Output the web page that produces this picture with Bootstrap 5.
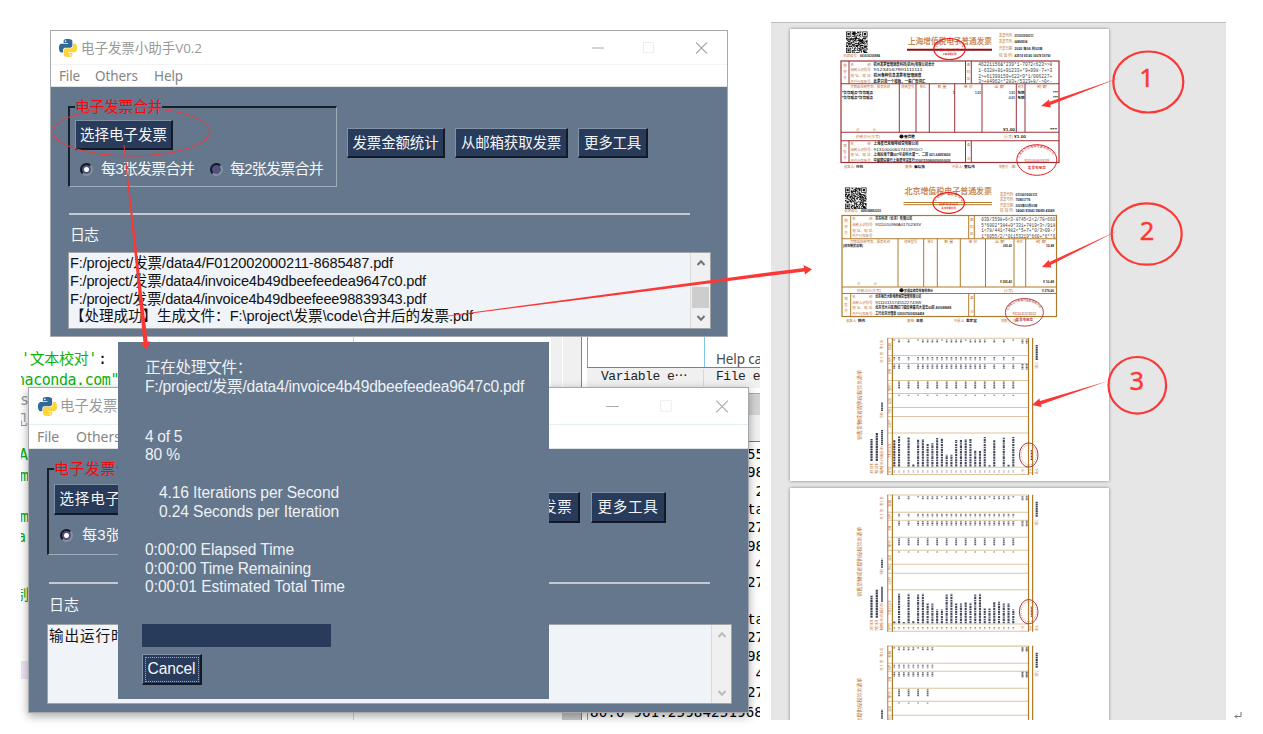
<!DOCTYPE html>
<html lang="zh-CN">
<head>
<meta charset="utf-8">
<meta name="viewport" content="width=device-width, initial-scale=1">
<title>电子发票小助手V0.2</title>
<link href="https://cdn.jsdelivr.net/npm/bootstrap@5.3.0/dist/css/bootstrap.min.css" rel="stylesheet">
<style>
  :root { --slate:#64778d; --navy:#283b5b; --pale:#f0f3f7; --pen:#fb3836; }
  body { font-family:"Liberation Sans","Noto Sans CJK SC",sans-serif; font-size:15px; line-height:18px; color:#000; }
  .desk { width:1263px; height:734px; }
  [data-w] { display:inline-block; white-space:pre; }
  /* program windows, free on the desktop */
  .win { position:absolute; background:var(--slate); border:1px solid #a5a9ae; color:#f4f6f8; }
  .win-a { left:50px; top:30px; width:678px; height:307px; }
  .win-b { left:28px; top:387px; width:721px; height:326px; box-shadow:0 3px 9px rgba(0,0,0,.35); }
  .tbar { background:#fff; color:#999; font-family:"Open Sans","Noto Sans CJK SC",sans-serif; font-size:13.5px; height:34px; border-bottom:1px solid #f3f3f3; padding-left:8px; }
  .win-b .tbar { height:37px; border-color:#e6f0f2; padding-left:9px; font-size:14.4px; }
  .mbar { background:#fff; color:#858585; font-family:"Noto Sans","Noto Sans CJK SC",sans-serif; font-size:13.5px; height:22px; padding-left:8px; border-bottom:1px solid #dde3e4; }
  .win-b .mbar { height:24px; font-size:14px; }
  .frame3d { border:solid; border-width:2px 1px 1px 2px; border-color:#171f2b #9eabb9 #9eabb9 #171f2b; width:269px; height:81px; margin-top:19px; padding:12px 0 0 5px; position:relative; }
  .frame3d .cap { position:absolute; top:-10px; left:5px; line-height:18px; color:#f5070b; background:var(--slate); }
  .tkbtn { background:var(--navy); color:#f4f6f8; border:solid 2px; border-color:#8492a6 #131a27 #131a27 #8492a6; border-width:1px 2px 2px 1px; height:30px; border-radius:0; padding:0; display:inline-flex; align-items:center; justify-content:center; white-space:nowrap; line-height:18px; font-size:14.5px; }
  .dot { width:13px; height:13px; border-radius:50%; background:#56517c; border:2px solid; border-color:#111723 #8492a3 #8492a3 #111723; display:inline-block; flex:none; }
  .dot.on { background:radial-gradient(circle,#fff 0 2px,#56517c 3px); }
  .rule { height:2px; background:#c3cad2; }
  .log { background:var(--pale); border:1px solid #a0a4a8; color:#111; position:relative; display:flex; font-size:14.6px; }
  .sbar { width:20px; background:#f0f0f0; border-left:1px solid #dadada; padding:6px 0; }
  .popup { position:absolute; left:118px; top:342px; width:431px; height:357px; background:var(--slate); color:#eef1f4; padding:17px 0 0 27px; }
  .popup .ln { height:18.8px; line-height:18.8px; white-space:pre; font-size:15.6px; }
  .meter { width:189px; height:23px; background:var(--navy); margin-left:-3px; }
  .cancel { width:60px; height:31px; margin:7px 0 0 -3px; outline:1px dotted #b5aa8d; outline-offset:-4px; font-size:15.6px; }
  /* IDE left behind the windows */
  .ide { position:absolute; left:21px; top:337px; width:739px; height:383px; overflow:hidden; font-family:"DejaVu Sans Mono","Noto Sans CJK SC",monospace; }
  .ide .bit { position:absolute; white-space:pre; }
  .g { color:#0db00d; } .gr { color:#999; }
  .strip { position:absolute; background:#f0f0f0; }
  .serifmono { font-family:"Liberation Mono","Noto Sans CJK SC",monospace; color:#222; font-size:13px; }
  .con { font-family:"DejaVu Sans Mono",monospace; font-size:14.2px; line-height:18.35px; text-align:right; }
  /* document viewer */
  .viewer { position:absolute; left:771px; top:22px; width:455px; height:698px; background:#e6e6e6; border-top:1px solid #bcbcbc; overflow:hidden; padding:6px 0 0 19px; gap:7px; }
  .sheet { display:block; width:319px; background:#fff; box-shadow:0 0 3px rgba(0,0,0,.45); flex:none; }
  .sheet text { font-family:"Liberation Sans","Noto Sans CJK SC",sans-serif; }
  .ink { position:absolute; left:0; top:0; pointer-events:none; }
  .ink text { font-family:"Noto Sans",sans-serif; stroke:var(--pen); stroke-width:.4px; }
  .ret { position:absolute; left:1233px; top:711px; }
</style>
</head>
<body class="bg-white overflow-hidden">
<svg width="0" height="0" class="position-absolute" aria-hidden="true">
  <symbol id="py" viewBox="0 0 24 24">
    <path fill="#306998" d="M14.25.18l.9.2.73.26.59.3.45.32.34.34.25.34.16.33.1.3.04.26.02.2-.01.13V8.5l-.05.63-.13.55-.21.46-.26.38-.3.31-.33.25-.35.19-.35.14-.33.1-.3.07-.26.04-.21.02H8.77l-.69.05-.59.14-.5.22-.41.27-.33.32-.27.35-.2.36-.15.37-.1.35-.07.32-.04.27-.02.21v3.06H3.17l-.21-.03-.28-.07-.32-.12-.35-.18-.36-.26-.36-.36-.35-.46-.32-.59-.28-.73-.21-.88-.14-1.05-.05-1.23.06-1.22.16-1.04.24-.87.32-.71.36-.57.4-.44.42-.33.42-.24.4-.16.36-.1.32-.05.24-.01h.16l.06.01h8.16v-.83H6.18l-.01-2.75-.02-.37.05-.34.11-.31.17-.28.25-.26.31-.23.38-.2.44-.18.51-.15.58-.12.64-.1.71-.06.77-.04.84-.02 1.27.05zm-6.3 1.98l-.23.33-.08.41.08.41.23.34.33.22.41.09.41-.09.33-.22.23-.34.08-.41-.08-.41-.23-.33-.33-.22-.41-.09-.41.09z"/>
    <path fill="#ffd43b" transform="rotate(180 12 12)" d="M14.25.18l.9.2.73.26.59.3.45.32.34.34.25.34.16.33.1.3.04.26.02.2-.01.13V8.5l-.05.63-.13.55-.21.46-.26.38-.3.31-.33.25-.35.19-.35.14-.33.1-.3.07-.26.04-.21.02H8.77l-.69.05-.59.14-.5.22-.41.27-.33.32-.27.35-.2.36-.15.37-.1.35-.07.32-.04.27-.02.21v3.06H3.17l-.21-.03-.28-.07-.32-.12-.35-.18-.36-.26-.36-.36-.35-.46-.32-.59-.28-.73-.21-.88-.14-1.05-.05-1.23.06-1.22.16-1.04.24-.87.32-.71.36-.57.4-.44.42-.33.42-.24.4-.16.36-.1.32-.05.24-.01h.16l.06.01h8.16v-.83H6.18l-.01-2.75-.02-.37.05-.34.11-.31.17-.28.25-.26.31-.23.38-.2.44-.18.51-.15.58-.12.64-.1.71-.06.77-.04.84-.02 1.27.05zm-6.3 1.98l-.23.33-.08.41.08.41.23.34.33.22.41.09.41-.09.33-.22.23-.34.08-.41-.08-.41-.23-.33-.33-.22-.41-.09-.41.09z"/>
  </symbol>
  <symbol id="wctl" viewBox="0 0 116 14">
    <path d="M0 7h12" stroke="#aaa" fill="none"/><rect x="51.500" y="1.500" width="10" height="10" fill="none" stroke="#eee"/>
    <path d="M104 1.500l11 11M115 1.500l-11 11" stroke="#aaa" stroke-width="1.100" fill="none"/>
  </symbol>
  <symbol id="up" viewBox="0 0 10 8"><path d="M1.500 6L5 2.300L8.500 6" fill="none" stroke="currentColor" stroke-width="2"/></symbol>
  <symbol id="down" viewBox="0 0 10 8"><path d="M1.500 2L5 5.700L8.500 2" fill="none" stroke="currentColor" stroke-width="2"/></symbol>
</svg>

<main class="desk position-relative">

  <section class="ide">
    <span class="bit g" style="left:0;top:13px" data-w="76">'文本校对'</span><span class="bit" style="left:77px;top:13px">:</span>
    <span class="bit g" style="left:-5px;top:34px" data-w="103">naconda.com"</span>
    <span class="bit gr" style="left:-1px;top:54px">s \</span><span class="bit gr" style="left:-8px;top:74px">见A</span>
    <span class="bit g" style="left:-2px;top:109px">AI</span><span class="bit g" style="left:-1px;top:130px">m</span>
    <span class="bit g" style="left:-1px;top:171px">m</span><span class="bit g" style="left:-4px;top:191px">a.</span>
    <span class="bit g" style="left:-7px;top:249px">制</span>
    <div class="strip" style="left:0;top:324px;width:12px;height:18px;background:#eee3f2"></div>
    <div class="strip" style="left:332px;top:0;width:1px;height:383px;background:#d0d0d0"></div>
    <div class="strip" style="left:530px;top:0;width:30px;height:50px"></div>
    <div class="strip" style="left:541px;top:0;width:1px;height:50px;background:#fff"></div>
    <div class="strip" style="left:541px;top:370px;width:19px;height:13px;background:#c9c9c9"></div>
    <div class="strip" style="left:560px;top:0;width:1px;height:383px;background:#80848a"></div>
    <div class="strip" style="left:566px;top:0;width:1px;height:383px;background:#999"></div>
    <div class="strip" style="left:683px;top:0;width:1px;height:30px;background:#80c4ea"></div>
    <span class="bit" style="left:695px;top:13px;font-family:'Noto Sans';font-size:13.500px;color:#4c4c4c" data-w="46">Help ca</span>
    <div class="strip" style="left:566px;top:30px;width:173px;height:21px;border-top:1px solid #7f8083"></div>
    <div class="strip" style="left:682px;top:32px;width:1px;height:17px;background:#d7d7d7"></div>
    <span class="bit serifmono" style="left:580px;top:31px" data-w="86">Variable e⋯</span>
    <span class="bit serifmono" style="left:695px;top:31px" data-w="44">File e</span>
    <div class="strip" style="left:728px;top:56px;width:11px;height:22px;background:#d4d4d4;border-top:1px solid #aaa"></div>
    <div class="strip" style="left:728px;top:78px;width:11px;height:27px;border-bottom:1px solid #777"></div>
    <div class="bit con" style="right:-4px;top:108px">55
98
2
ta
27
98
4
27

ta
27
98
4
27</div>
    <span class="bit con" style="left:569px;top:366px" data-w="173">80.0 961.25984251968</span>
  </section>

  <section class="win win-a">
    <header class="tbar d-flex align-items-center">
      <svg width="18" height="18"><use href="#py"/></svg><span class="ms-1" data-w="121">电子发票小助手V0.2</span>
      <svg class="ms-auto" width="116" height="14" style="margin-right:19px"><use href="#wctl"/></svg>
    </header>
    <nav class="mbar d-flex align-items-center"><span data-w="21">File</span><span style="margin-left:15px" data-w="43">Others</span><span style="margin-left:16px" data-w="29">Help</span></nav>
    <div class="d-flex" style="padding-left:17px">
      <div class="frame3d"><span class="cap" data-w="87">电子发票合并</span>
        <button class="tkbtn" style="width:98px"><span data-w="87">选择电子发票</span></button>
        <div class="d-flex align-items-center" style="margin:10px 0 0 5px"><i class="dot on"></i><span style="margin-left:8px" data-w="93">每3张发票合并</span><i class="dot" style="margin-left:16px"></i><span style="margin-left:7px" data-w="93">每2张发票合并</span></div>
      </div>
      <div class="d-flex" style="padding:41px 0 0 10px;gap:10px">
        <button class="tkbtn" style="width:98px"><span data-w="86">发票金额统计</span></button>
        <button class="tkbtn" style="width:113px"><span data-w="100">从邮箱获取发票</span></button>
        <button class="tkbtn" style="width:70px"><span data-w="57">更多工具</span></button>
      </div>
    </div>
    <div class="rule" style="margin:26px 37px 0 18px"></div>
    <div style="margin:11px 0 0 19px" data-w="28">日志</div>
    <div class="log" style="margin:8px 16px 0 17px;height:77px">
      <div class="flex-grow-1" style="padding:2px 0 0 1px;line-height:17.800px">
        <div><span data-w="323">F:/project/发票/data4/F012002000211-8685487.pdf</span></div>
        <div><span data-w="356">F:/project/发票/data4/invoice4b49dbeefeedea9647c0.pdf</span></div>
        <div><span data-w="356">F:/project/发票/data4/invoice4b49dbeefeee98839343.pdf</span></div>
        <div><span data-w="403">【处理成功】生成文件：F:\project\发票\code\合并后的发票.pdf</span></div>
      </div>
      <div class="sbar d-flex flex-column align-items-center text-secondary"><svg width="10" height="8"><use href="#up"/></svg><div class="mt-auto" style="width:17px;height:21px;background:#cdcdcd;margin-bottom:6px"></div><svg width="10" height="8"><use href="#down"/></svg></div>
    </div>
  </section>

  <section class="win win-b">
    <header class="tbar d-flex align-items-center">
      <svg width="19" height="19"><use href="#py"/></svg><span style="margin-left:3px" data-w="129">电子发票小助手V0.2</span>
      <svg class="ms-auto" width="123" height="15" style="margin-right:19px"><use href="#wctl"/></svg>
    </header>
    <nav class="mbar d-flex align-items-center"><span data-w="22">File</span><span style="margin-left:17px" data-w="45">Others</span></nav>
    <div class="d-flex" style="padding-left:18px">
      <div class="frame3d" style="width:286px;height:87px;margin-top:19px;padding-top:14px"><span class="cap" data-w="93">电子发票合并</span>
        <button class="tkbtn" style="width:104px;height:31px"><span data-w="92">选择电子发票</span></button>
        <div class="d-flex align-items-center" style="margin:11px 0 0 6px"><i class="dot on"></i><span style="margin-left:9px" data-w="100">每3张发票合并</span></div>
      </div>
      <div class="d-flex" style="padding:43px 0 0 11px;gap:11px">
        <button class="tkbtn" style="width:104px;height:31px"><span data-w="92">发票金额统计</span></button>
        <button class="tkbtn" style="width:121px;height:31px"><span data-w="107">从邮箱获取发票</span></button>
        <button class="tkbtn" style="width:75px;height:31px"><span data-w="61">更多工具</span></button>
      </div>
    </div>
    <div class="rule" style="margin:27px 38px 0 20px"></div>
    <div style="margin:12px 0 0 20px" data-w="30">日志</div>
    <div class="log" style="margin:10px 16px 0 18px;height:80px">
      <div class="flex-grow-1" style="padding:2px 0 0 1px"><span data-w="93">输出运行时间</span></div>
      <div class="sbar d-flex flex-column align-items-center justify-content-between" style="color:#bbb"><svg width="10" height="8"><use href="#up"/></svg><svg width="10" height="8"><use href="#down"/></svg></div>
    </div>
  </section>

  <section class="popup">
    <div class="ln"><span data-w="107">正在处理文件：</span></div>
    <div class="ln"><span data-w="379">F:/project/发票/data4/invoice4b49dbeefeedea9647c0.pdf</span></div>
    <div class="ln" style="margin-top:31px"><span data-w="37">4 of 5</span></div>
    <div class="ln"><span data-w="35">80 %</span></div>
    <div class="ln" style="margin:19px 0 0 14px"><span data-w="180">4.16 Iterations per Second</span></div>
    <div class="ln" style="margin-left:14px"><span data-w="180">0.24 Seconds per Iteration</span></div>
    <div class="ln" style="margin-top:19px"><span data-w="149">0:00:00 Elapsed Time</span></div>
    <div class="ln"><span data-w="166">0:00:00 Time Remaining</span></div>
    <div class="ln"><span data-w="200">0:00:01 Estimated Total Time</span></div>
    <div class="meter" style="margin-top:27px"></div>
    <button class="tkbtn cancel"><span data-w="48">Cancel</span></button>
  </section>

  <section class="viewer d-flex flex-column">
    <svg class="sheet" id="sheet1" viewBox="790 29 319 452" height="452"></svg>
    <svg class="sheet" id="sheet2" viewBox="790 488 319 452" height="452"></svg>
  </section>

  <svg class="ink" width="1263" height="734" fill="#fb3836">
    <ellipse cx="131.500" cy="131.700" rx="78.500" ry="24.300" fill="none" stroke="#ee3a40"/>
    <path d="M123.600 145L143.400 342L141 342.500L146 350L150.300 341.500L147.600 341.600L124.400 145Z"/>
    <path d="M447 315.700L780 270.900L804 268L803.500 265L812 269.300L805 274.500L804.500 271.500L780 274.400L447 316.500Z"/>
    <path d="M1119 78L1050.300 105L1050.700 107.500L1041 106L1049 99.500L1049.400 101.700Z"/>
    <path d="M1117 231L1050.600 265L1051.300 267.500L1042 267L1048.700 260L1049.500 262Z"/>
    <path d="M1108 381L1041 404.400L1041.600 407L1032 405L1039.300 398.600L1040 401Z"/>
    <g fill="none" stroke="#fb3836" stroke-width="2.200"><ellipse cx="1148.300" cy="82" rx="35" ry="30.500"/><ellipse cx="1146.700" cy="234" rx="35" ry="30.700"/><ellipse cx="1137.300" cy="385.300" rx="28.800" ry="28.300"/></g>
    <g font-size="25.500" text-anchor="middle"><text x="1146.500" y="87.300">1</text><text x="1147" y="240">2</text><text x="1136.700" y="390">3</text></g>
  </svg>
  <svg class="ret" width="10" height="10"><path d="M8 1v4.500H2M4 3.500L2 5.500L4 7.500" fill="none" stroke="#666" stroke-width=".9"/></svg>
</main>

<script src="https://cdn.jsdelivr.net/npm/bootstrap@5.3.0/dist/js/bootstrap.bundle.min.js"></script>
<script>
// Spread labels to their design width
document.querySelectorAll('[data-w]').forEach(function (e) {
  var r = document.createRange(); r.selectNodeContents(e);
  var n = Array.from(e.textContent).length, w = r.getBoundingClientRect().width;
  e.style.letterSpacing = ((+e.dataset.w - w) / n).toFixed(3) + 'px';
});

var seed = 7;
function rnd() { seed = (seed * 16807) % 2147483647; return seed / 2147483647; }
function T(x, y, s, w, c, size, extra) {
  return '<text x="' + x + '" y="' + (y + (size || 3.9) * .36) + '" font-size="' + (size || 3.9) + '" fill="' + c + '"' +
    (w ? ' textLength="' + w + '" lengthAdjust="spacingAndGlyphs"' : '') + ' ' + (extra || '') + '>' + s.replace(/</g, '&lt;') + '</text>';
}
function L(x1, y1, x2, y2, c, w, d, o) {
  return '<path d="M' + x1 + ' ' + y1 + 'L' + x2 + ' ' + y2 + '" stroke="' + c + '" stroke-width="' + (w || .9) + '"' + (d ? ' stroke-dasharray="' + d + '"' : '') + (o ? ' opacity="' + o + '"' : '') + ' fill="none"/>';
}
function qr(x, y, size) {
  var n = 29, m = size / n, d = '';
  for (var i = 0; i < n; i++) for (var j = 0; j < n; j++) {
    var a = i, b = j, on = rnd() > .42;
    if (a > 20 && b < 8) a = n - 1 - a; else if (b > 20 && a < 8) b = n - 1 - b;
    if (a < 8 && b < 8) { var k = Math.max(Math.abs(a - 3), Math.abs(b - 3)); on = k < 2 || k === 3; }
    if (on) d += 'M' + (x + j * m).toFixed(2) + ' ' + (y + i * m).toFixed(2) + 'h' + m + 'v' + m + 'h-' + m + 'z';
  }
  return '<path d="' + d + '" fill="#111"/>';
}
function seal(id, cx, cy, rx, ry, c, arc, mid, low, w) {
  var ax = rx - 3.2, ay = ry - 3.2, fs = ry > 12 ? 2.9 : 2.2, y0 = cy - 1.5;
  return '<ellipse cx="' + cx + '" cy="' + cy + '" rx="' + rx + '" ry="' + ry + '" fill="none" stroke="' + c + '" stroke-width="' + w + '"/>' +
    '<path id="' + id + '" d="M' + (cx - ax) + ' ' + y0 + 'A' + ax + ' ' + (ay - 1) + ' 0 0 1 ' + (cx + ax) + ' ' + y0 + '" fill="none"/>' +
    '<text font-size="' + fs + '" fill="' + c + '" textLength="' + (ax * 2.4) + '"><textPath href="#' + id + '">' + arc + '</textPath></text>' +
    T(cx - rx * .62, cy + 1.2, mid, rx * 1.24, c, fs) + T(cx - rx * .45, cy + ry * .52, low, rx * .9, c, fs, 'font-weight="bold"');
}
function invoice(o) {
  var c = o.line, b = '#bd7333', k = '#1c1c1c', s = qr(o.qr[0], o.qr[1], 21.5), i;
  s += T(o.l + 2.500, o.mach, '机器编号:', 14, b, 3.6) + T(o.l + 19, o.mach, o.machNo, 20, k, 3.6, 'font-weight="bold"');
  s += T(o.title[0], o.title[1], o.title[3], o.title[2], b, 8.300, 'stroke="' + b + '" stroke-width=".15"');
  o.under.forEach(function (u) { s += L(o.title[0] - 1, u, 992, u, o.ul, o.uw); });
  o.meta.forEach(function (m) { s += T(o.mx, m[0], m[1], 14, b, 4) + T(o.mx + 15.500, m[0], m[2], m[3], k, 3.8, 'font-weight="bold"'); });
  s += '<rect x="' + o.l + '" y="' + o.y[0] + '" width="' + (o.r - o.l) + '" height="' + (o.y[4] - o.y[0]) + '" fill="none" stroke="' + c + '" stroke-width="1.200"/>';
  for (i = 1; i < 4; i++) s += L(o.l, o.y[i], o.r, o.y[i], c, 1.1);
  o.v.forEach(function (x) { s += L(x, o.y[0], x, o.y[1], c, 1) + L(x, o.y[3], x, o.y[4], c, 1); });
  o.m.forEach(function (x) { s += L(x, o.y[1], x, o.y[2], c, 1); });
  ['购买方', '销售方'].forEach(function (t, q) { for (i = 0; i < 3; i++) s += T(o.l + 2.200, o.y[q ? 3 : 0] + 5 + i * 6, t[i], 0, b, 3.6); });
  ['密码区', '备 注'].forEach(function (t, q) { for (i = 0; i < 3; i++) s += T(o.v[1] + 1.200, o.y[q ? 3 : 0] + 4 + i * 7, t[i], 0, b, 3.6); });
  ['名　　　　称:', '纳税人识别号:', '地 址、电 话:', '开户行及账号:'].forEach(function (t, r) {
    s += T(o.v[0] + 1.500, o.y[0] + 3.200 + r * 5.700, t, 21, b) + T(o.v[0] + 1.500, o.y[3] + 3.200 + r * 5.500, t, 21, b);
    var p = o.buy[r], q = o.sell[r];
    if (p) s += T(o.v[0] + 24.500, o.y[0] + 3.200 + r * 5.700, p[0], p[1], k, 4, r === 1 ? '' : 'font-weight="bold"');
    if (q) s += T(o.v[0] + 24.500, o.y[3] + 3.200 + r * 5.500, q[0], q[1], k, 4, r === 1 ? '' : 'font-weight="bold"');
  });
  o.code.forEach(function (t, r) { s += T(o.v[2] + 7, o.y[0] + 3.600 + r * 5.600, t, 74, '#444', 5, 'style="font-family:\'Liberation Mono\'"'); });
  var e = [o.l].concat(o.m, [o.r]);
  ['货物或应税劳务、服务名称', '规格型号', '单位', '数 量', '单 价', '金 额', '税率', '税 额'].forEach(function (t, j) {
    var w = [40, 13, 6, 9, 9, 10, 6, 10][j]; s += T((e[j] + e[j + 1] - w) / 2, o.y[1] + 3.200, t, w, b);
  });
  o.body.forEach(function (t) { s += T(t[0], t[1], t[2], t[3], k, 3.8, 'font-weight="bold"'); });
  s += T(o.l + 15, o.y[2] - 3, '合　　　　计', 20, b) + T(o.l + 15, (o.y[2] + o.y[3]) / 2, '价税合计(大写)', 24, b) + T(1004, (o.y[2] + o.y[3]) / 2, '(小写)', 9, b);
  s += '<circle cx="901.500" cy="' + (o.y[2] + o.y[3]) / 2 + '" r="2.100" fill="#111"/>';
  [['收款人:', 844, 11], ['复核:', 905, 8], ['开票人:', 952, 11], ['销售方:（章）', 999, 19]].forEach(function (t, j) {
    s += T(t[1] + o.fx, o.foot, t[0], t[2], b) + (o.names[j] ? T(t[1] + t[2] + o.fx + 1, o.foot, o.names[j], o.names[j].length * 3.600, k, 3.8, 'font-weight="bold"') : '');
  });
  return s + o.seals;
}
// Sales list, printed sideways; dy shifts a copy down the roll
function list(dy, kind) {
  var c = '#b07c28', f = '#dcc6a2', n = '#3c4056', s = '', ys = [338.3, 355.5, 363.5, 380.5, 393.5, 407.5, 416.5, 433, 467.3, 474.5];
  var D = ['1.7 .6 2.4 .7', '2.2 .8 1.5 .6', '1.3 .6 2.8 .8'];
  function V(x, y, t, w, col, sz) { return '<text transform="translate(' + (x + sz * .36) + ' ' + (y + dy) + ') rotate(-90)" font-size="' + sz + '" fill="' + col + '" textLength="' + w + '" lengthAdjust="spacingAndGlyphs">' + t + '</text>'; }
  ys.forEach(function (y) { s += L(887.500, y + dy, 1028, y + dy, f, 1.1); });
  s += L(887.700, 338 + dy, 887.700, 475 + dy, c, 1.2, '', .8) + L(892.400, 338 + dy, 892.400, 475 + dy, c, 1.2) + L(1028.500, 338 + dy, 1028.500, 475 + dy, c, 1.2) + L(1032.600, 338 + dy, 1032.600, 475 + dy, c, 1.2);
  s += V(859.500, 440, '销售货物或者提供应税劳务清单', 70, '#bd7333', 5);
  s += V(871.500, 474, '购买方名称:', 11, '#bd7333', 3.4) + V(876.800, 474, '销售方名称:', 11, '#bd7333', 3.4) + V(882, 474, '所属增值税电子普通发票代码:', 28, '#bd7333', 3.4);
  s += L(871.500, 461 + dy, 871.500, 439 + dy, n, 2.2, '2.1 .5') + L(876.800, 461 + dy, 876.800, 433 + dy, n, 2.2, '2.1 .5') + L(882, 445 + dy, 882, 430 + dy, n, 1.9, '1.5 .5');
  s += V(882, 418, '号码:', 6, '#bd7333', 3.4) + L(882, 411 + dy, 882, 402 + dy, n, 1.8, '1.5 .6') + V(882, 363, '共 1 页', 11, '#bd7333', 3.2) + V(882, 349, '第 1 页', 9, '#bd7333', 3.2);
  s += V(1036.700, 369, '开票日期:', 7, '#bd7333', 3) + L(1036.700, 360 + dy, 1036.700, 345 + dy, n, 2.1, '1.8 .5') + V(1036.700, 474, '备注:', 6, '#bd7333', 3);
  [['序号', 473, 5], ['货物(劳务)名称', 458, 14], ['规格型号', 428, 8], ['单位', 413.500, 5], ['数量', 404, 6], ['单价', 391, 8], ['金额', 374, 5], ['税率', 362, 5], ['税额', 350, 7]].forEach(function (h) { s += V(889.900, h[1], h[0], h[2], '#c07e45', 3.2); });
  var hs = [[27, 31, 0, 30, 1, 28, 28, 24, 24, 29, 29, 12, 12, 27, 27, 28, 28, 16, 16, 30, 1, 27, 0, 30, 1, 30], [1, 30, 1, 30, 1, 30, 30, 20, 20, 14, 14, 30, 30, 20, 20, 21, 21, 30, 30, 15, 15, 22, 22, 20, 20, 14], [1, 30, 1, 30, 0, 30, 0, 20, 20]][kind];
  hs.forEach(function (h, j) {
    var x = 894.300 + j * 4.760, full = h > 2;
    if (h) s += L(x, 466.5 + dy, x, 466.5 - h * (h > 2 ? .98 : 2) + dy, n, 2.1, D[j % 3], .95);
    if (kind < 2 || h) s += L(x, 472.500 + dy, x, 470.300 + dy, n, 1.5, '.8 .5', .55);
    if (!full && kind < 2) return;
    s += L(x, 339.500 + dy, x, (j % 5 ? 343 : 341) + dy, n, 1.7, '1.1 .5', .75) + L(x, 357 + dy, x, 360.500 + dy, n, 1.7, '1 .6', .8) + L(x, 364.500 + dy, x, 369 + dy, n, 1.8, '1.1 .5', .8);
    if (j % 2) s += L(x, 381.500 + dy, x, 389 + dy, n, 1.8, '1.3 .5', .8) + L(x, 394.800 + dy, x, 395.800 + dy, n, 1.6, '', .7);
  });
  [1022.5, 1026.7].forEach(function (x) { s += L(x, 339.500 + dy, x, 344 + dy, n, 1.9, '1.1 .4', .8) + L(x, 364 + dy, x, 370 + dy, n, 1.9, '1.1 .4', .8); });
  s += V(1023, 474, '小计', 5, '#bd7333', 3) + V(1030.500, 474, '合计', 5, '#bd7333', 3);
  s += '<ellipse cx="1028.700" cy="' + (455 + dy) + '" rx="9.300" ry="12.200" fill="none" stroke="#ae3a3a" stroke-width="1"/><ellipse cx="1028.700" cy="' + (455 + dy) + '" rx="7.500" ry="10" fill="none" stroke="#b76767" stroke-width="1.200" stroke-dasharray=".8 1.300" opacity=".6"/>' + L(1031.500, 450 + dy, 1031.500, 460 + dy, '#9d302b', 1.500, '1 .5');
  return s;
}
var one = invoice({
  line: '#9c3034', qr: [846, 31.5], l: 841, r: 1059, mach: 55.6, machNo: '661616300884', title: [908, 41.5, 84, '上海增值税电子普通发票'],
  under: [49.7], ul: '#8e1015', uw: 2, mx: 999, fx: 0,
  meta: [[35.300, '发票代码:', '031001900311', 19], [42, '发票号码:', '64868504', 13], [49, '开票日期:', '2020 年06 月02日', 28], [55.600, '校 验 码:', '42974 95140 16678 59790', 36]],
  y: [61, 83.7, 132.2, 140.8, 162.5], v: [849, 965.5, 971.3], m: [899.3, 916, 929.3, 954.7, 982, 1016.3, 1025],
  buy: [['杭州发票管理调度科技(杭州)有限公司合计', 61], ['91234567891111111', 49], ['杭州各种信息发票有管理调度', 48], ['此票只是一个模板，一般广告词汇', 52]],
  sell: [['上海星巴克咖啡经营有限公司', 45], ['91310000607413955O', 49], ['上海局海宁路007号会科大厦一、二层 021-64959600', 77], ['中国建设银行上海漕河泾支行31001550800050000020', 77]],
  code: ['46221156&*239*1-7072<623>>8', '1-6328+91+91233+*9+998-7+>3', '2>+61399159+622<9*1/006227+', '3>+84962<*283+/5323+8/->0<-'],
  body: [[842, 92.300, '*餐饮服务*餐饮服务', 31], [842, 97.500, '*餐饮服务*餐饮服务', 31], [953, 92.300, '1', 1.5], [975, 92.300, '1.01', 6], [1009, 92.300, '1.01', 6], [1008, 97.500, '-0.01', 7], [1017.5, 92.300, '免税', 7], [1017.5, 97.500, '免税', 7], [1053, 92.300, '***', 5], [1053, 97.500, '***', 5], [1003, 130, '¥1.00', 12], [1050, 130, '***', 7], [904, 136.500, '壹圆整', 11], [1014, 136.500, '¥1.00', 12]],
  foot: 167, names: ['孙莉', '秦晓怡', '童晓伟'],
  seals: seal('s1', 949.5, 49, 15.7, 10.5, '#ec1718', '全国统一发票监制章', '国家税务总局', '上海市税务局', 1.2) + seal('s2', 1036.8, 160, 20, 15.3, '#df2227', '上海星巴克咖啡经营有限公司', '913100006074139', '发票专用章', 1)
});
var two = invoice({
  line: '#b07a2c', qr: [845, 187.5], l: 842, r: 1056.5, mach: 211, machNo: '499098863203', title: [904.5, 191.5, 87.5, '北京增值税电子普通发票'],
  under: [202.5, 204.7], ul: '#b17c32', uw: 1, mx: 1000, fx: 2,
  meta: [[194.500, '发票代码:', '011001900111', 22], [200, '发票号码:', '75801776', 15], [205.500, '开票日期:', '2020年03月03日', 22], [211, '校 验 码:', '14643 81843 58089 43049', 39]],
  y: [215.5, 238.7, 287, 293.5, 316.5], v: [850.7, 968.7, 974.3], m: [898, 923.7, 937.3, 960.3, 985.5, 1014, 1025.7],
  buy: [['京东科技（北京）有限公司', 37], ['91110109MA01702S3V', 46]],
  sell: [['北京每日大新电商运营管理有限公司', 46], ['91110115745522743W', 46], ['北京市大兴区西红门镇欣荣嘉鸿大道总60层 400088888', 76], ['工行北京分理处 0200075009264458', 49]],
  code: ['039/3598+6<3-8745<2<2/78<660', '5*6002*384+9*331+7419<3>/918', '1<78/441<7482<*5+7+*0/3>09-/', '1*6055/2/*01153219*660+*6**6'],
  body: [[843, 246, '(详见销货清单)', 20], [1003, 246, '265.42', 9], [1046, 246, '10.48', 8], [1000, 281.800, '¥ 265.42', 12], [1043, 281.800, '¥ 10.48', 11], [904, 290.200, '贰佰柒拾圆零角零捌分', 29], [1042, 290.200, '¥ 276.66', 12]],
  foot: 320.3, names: ['韩伟', '王芳', '金家富'],
  seals: seal('s3', 948.7, 203, 15.7, 10.3, '#ec1718', '全国统一发票监制章', '国家税务总局', '北京市税务局', 1.2) + seal('s4', 1024.4, 312.3, 19, 13.8, '#ad3034', '北京每日大新电商运营有限公司', '9111011574552', '发票专用章', .9)
});
document.getElementById('sheet1').innerHTML = one + two + list(0, 0);
document.getElementById('sheet2').innerHTML = list(156.7, 1) + list(307.8, 2);
</script>
</body>
</html>
